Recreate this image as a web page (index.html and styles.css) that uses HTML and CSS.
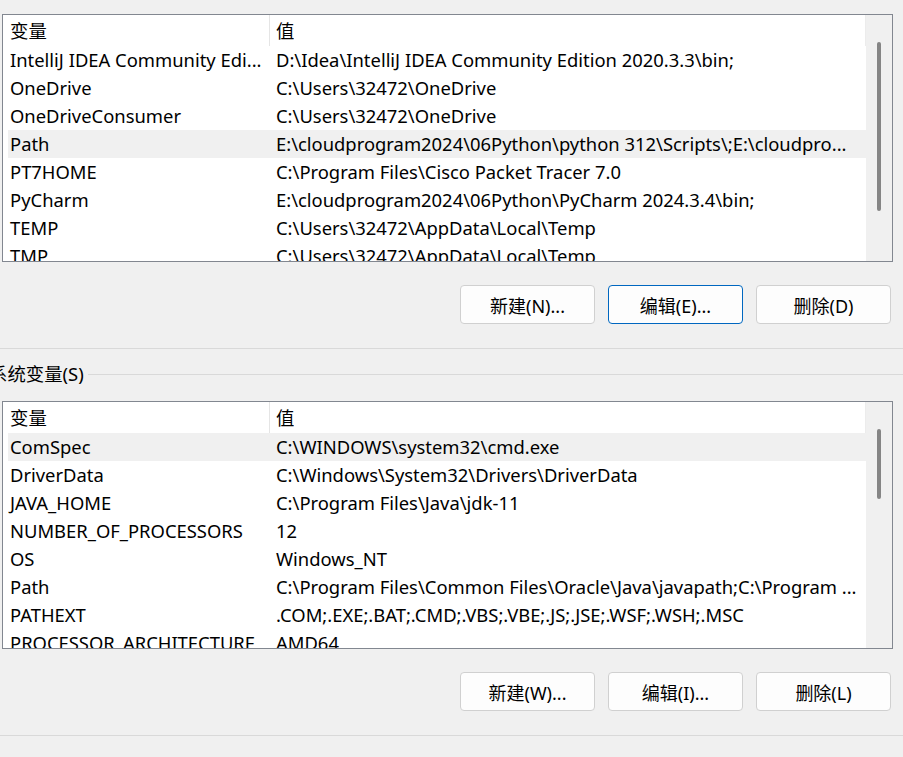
FILE: index.html
```html
<!DOCTYPE html>
<html lang="zh-CN">
<head>
<meta charset="utf-8">
<title>环境变量</title>
<link rel="stylesheet" href="styles.css">
</head>
<body>
<div class="page">
  <section class="section user">
    <div class="listbox">
      <div class="list">
        <div class="head">
          <div class="cell name">变量</div>
          <div class="cell value">值</div>
        </div>
        <div class="row"><div class="cell name">IntelliJ IDEA Community Edi...</div><div class="cell value">D:\Idea\IntelliJ IDEA Community Edition 2020.3.3\bin;</div></div>
        <div class="row"><div class="cell name">OneDrive</div><div class="cell value">C:\Users\32472\OneDrive</div></div>
        <div class="row"><div class="cell name">OneDriveConsumer</div><div class="cell value">C:\Users\32472\OneDrive</div></div>
        <div class="row sel"><div class="cell name">Path</div><div class="cell value">E:\cloudprogram2024\06Python\python 312\Scripts\;E:\cloudpro...</div></div>
        <div class="row"><div class="cell name">PT7HOME</div><div class="cell value">C:\Program Files\Cisco Packet Tracer 7.0</div></div>
        <div class="row"><div class="cell name">PyCharm</div><div class="cell value">E:\cloudprogram2024\06Python\PyCharm 2024.3.4\bin;</div></div>
        <div class="row"><div class="cell name">TEMP</div><div class="cell value">C:\Users\32472\AppData\Local\Temp</div></div>
        <div class="row"><div class="cell name">TMP</div><div class="cell value">C:\Users\32472\AppData\Local\Temp</div></div>
      </div>
      <div class="scroll"><div class="thumb thumb-top"></div></div>
    </div>
    <div class="buttons">
      <button class="btn">新建(N)...</button>
      <button class="btn focus">编辑(E)...</button>
      <button class="btn">删除(D)</button>
    </div>
  </section>
  <div class="divider"></div>
  <section class="section system">
    <div class="group-title"><span class="label">系统变量(S)</span><span class="line"></span></div>
    <div class="listbox">
      <div class="list">
        <div class="head">
          <div class="cell name">变量</div>
          <div class="cell value">值</div>
        </div>
        <div class="row sel"><div class="cell name">ComSpec</div><div class="cell value">C:\WINDOWS\system32\cmd.exe</div></div>
        <div class="row"><div class="cell name">DriverData</div><div class="cell value">C:\Windows\System32\Drivers\DriverData</div></div>
        <div class="row"><div class="cell name">JAVA_HOME</div><div class="cell value">C:\Program Files\Java\jdk-11</div></div>
        <div class="row"><div class="cell name">NUMBER_OF_PROCESSORS</div><div class="cell value">12</div></div>
        <div class="row"><div class="cell name">OS</div><div class="cell value">Windows_NT</div></div>
        <div class="row"><div class="cell name">Path</div><div class="cell value">C:\Program Files\Common Files\Oracle\Java\javapath;C:\Program ...</div></div>
        <div class="row"><div class="cell name">PATHEXT</div><div class="cell value">.COM;.EXE;.BAT;.CMD;.VBS;.VBE;.JS;.JSE;.WSF;.WSH;.MSC</div></div>
        <div class="row"><div class="cell name">PROCESSOR_ARCHITECTURE</div><div class="cell value">AMD64</div></div>
      </div>
      <div class="scroll"><div class="thumb thumb-bottom"></div></div>
    </div>
    <div class="buttons">
      <button class="btn">新建(W)...</button>
      <button class="btn">编辑(I)...</button>
      <button class="btn">删除(L)</button>
    </div>
  </section>
  <div class="divider bottom"></div>
</div>
</body>
</html>
```
FILE: styles.css
```css
* { box-sizing: border-box; }
html, body {
  margin: 0;
  padding: 0;
  background: #f0f0f0;
}
body {
  width: 903px;
  height: 757px;
  overflow: hidden;
  font-family: "Noto Sans", "Noto Sans CJK SC", sans-serif;
  font-size: 18.4px;
  color: #000;
}
.page {
  display: flex;
  flex-direction: column;
  padding-top: 14px;
}
.listbox {
  margin-left: 2px;
  width: 891px;
  height: 248px;
  border: 1px solid #828790;
  background: #fff;
  display: flex;
  overflow: hidden;
}
.list {
  flex: 1;
  display: flex;
  flex-direction: column;
  overflow: hidden;
}
.head {
  display: flex;
  height: 31px;
  flex-shrink: 0;
  border-right: 1px solid #ececec;
}
.head .cell {
  line-height: 31px;
  height: 31px;
}
.head .cell.name {
  border-right: 1px solid #e5e5e5;
  padding-left: 7px;
  width: 267px;
}
.head .cell.value {
  padding-left: 6px;
}
.row {
  display: flex;
  height: 28px;
  flex-shrink: 0;
  margin-left: 5px;
}
.row.sel { background: #f0f0f0; }
.cell {
  white-space: nowrap;
  overflow: hidden;
}
.row .cell {
  line-height: 28px;
  height: 28px;
}
.row .cell.name {
  width: 262px;
  padding-left: 2px;
}
.row .cell.value {
  flex: 1;
  padding-left: 6px;
}
.scroll {
  width: 26px;
  flex-shrink: 0;
  background: #f0f0f0;
  position: relative;
}
.thumb {
  position: absolute;
  left: 11px;
  width: 4px;
  border-radius: 2px;
  background: #858585;
}
.thumb-top { top: 27px; height: 169px; }
.thumb-bottom { top: 27px; height: 70px; }
.buttons {
  display: flex;
  justify-content: flex-end;
  gap: 13px;
  padding-right: 12px;
  margin-top: 23px;
}
.btn {
  width: 135px;
  height: 39px;
  border: 1px solid #d0d0d0;
  border-radius: 4px;
  background: #fdfdfd;
  font-family: "Noto Sans", "Noto Sans CJK SC", sans-serif;
  font-size: 18px;
  color: #000;
  padding: 0;
}
.btn.focus { border-color: #0067c0; }
.divider {
  height: 1px;
  background: #d9d9d9;
  margin-top: 24px;
}
.group-title {
  display: flex;
  align-items: center;
  height: 26px;
  margin-top: 12px;
  margin-left: -11px;
}
.group-title .label {
  white-space: nowrap;
  padding-right: 4px;
  line-height: 26px;
}
.group-title .line {
  flex: 1;
  height: 1px;
  background: #d9d9d9;
}
.system .listbox { margin-top: 14px; }
.divider.bottom { margin-top: 24px; }
```
